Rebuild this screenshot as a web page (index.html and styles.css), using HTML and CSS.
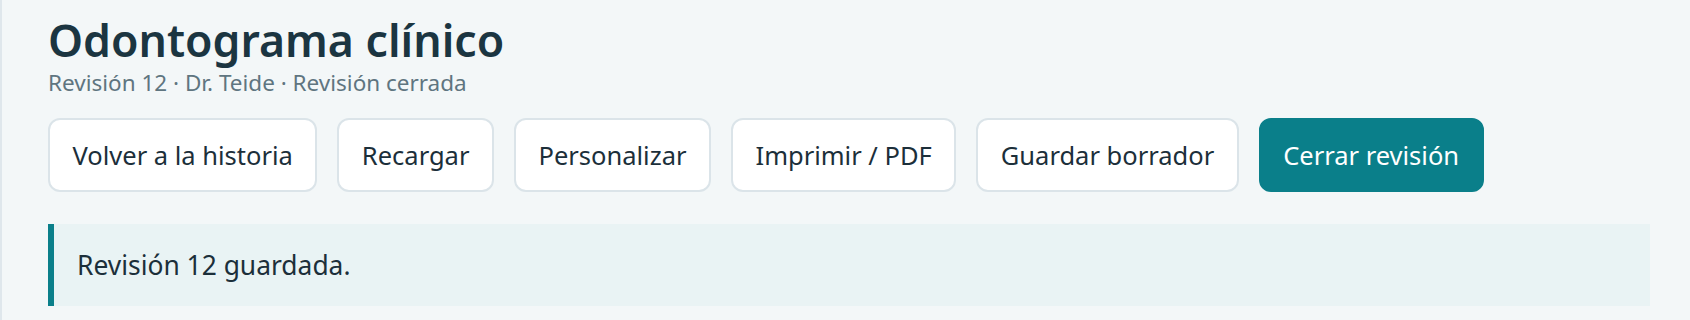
FILE: index.html
```html
<!DOCTYPE html>
<html lang="es">
<head>
<meta charset="utf-8">
<title>Odontograma clínico</title>
<link rel="stylesheet" href="styles.css">
</head>
<body>
<div class="page">
  <header class="head">
    <h1 class="title">Odontograma clínico</h1>
    <p class="meta">Revisión 12 · Dr. Teide · Revisión cerrada</p>
  </header>
  <div class="actions">
    <button class="btn">Volver a la historia</button>
    <button class="btn">Recargar</button>
    <button class="btn">Personalizar</button>
    <button class="btn">Imprimir / PDF</button>
    <button class="btn">Guardar borrador</button>
    <button class="btn btn-primary">Cerrar revisión</button>
  </div>
  <div class="notice">Revisión 12 guardada.</div>
</div>
</body>
</html>
```
FILE: styles.css
```css
html, body {
  margin: 0;
  padding: 0;
  height: 100%;
}
body {
  background: #f3f7f8;
  font-family: "Noto Sans", "Open Sans", sans-serif;
  color: #1c2f3a;
}
.page {
  border-left: 2px solid #dfe7ec;
  padding: 12px 40px 0 46px;
  min-height: 100%;
  box-sizing: border-box;
}
.title {
  margin: 0;
  font-size: 44.6px;
  line-height: 56px;
  font-weight: 600;
  color: #1b3541;
}
.meta {
  margin: 0;
  font-size: 22.5px;
  line-height: 30px;
  color: #5f7580;
}
.actions {
  display: flex;
  gap: 20px;
  margin-top: 20px;
}
.btn {
  font-family: inherit;
  font-size: 25.5px;
  line-height: 36px;
  color: #1c2f3a;
  background: #ffffff;
  border: 2px solid #dbe4e9;
  border-radius: 12px;
  padding: 17px 22.5px;
  cursor: pointer;
}
.btn-primary {
  background: #0a7f8a;
  border-color: #0a7f8a;
  color: #ffffff;
}
.notice {
  margin-top: 32px;
  width: 1602px;
  box-sizing: border-box;
  background: #e9f3f4;
  border-left: 6px solid #0a7f8a;
  padding: 23px 23px;
  font-size: 26.4px;
  line-height: 36px;
  color: #1c2f3a;
}
```
